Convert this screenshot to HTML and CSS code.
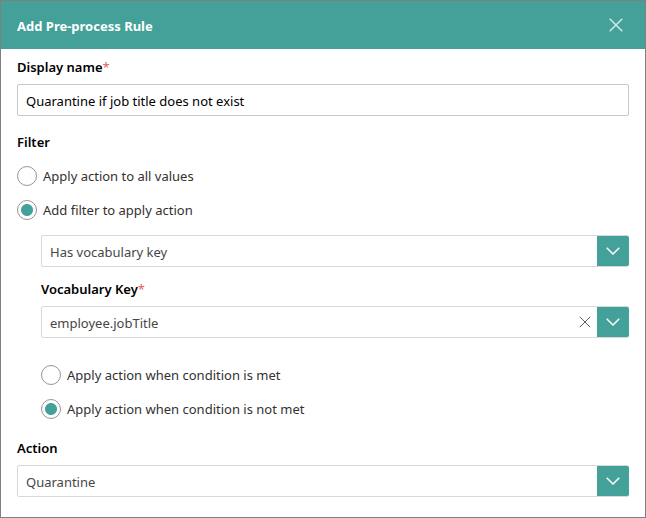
FILE: index.html
```html
<!DOCTYPE html>
<html lang="en">
<head>
<meta charset="utf-8">
<title>Add Pre-process Rule</title>
<link rel="stylesheet" href="styles.css">
</head>
<body>
<form class="dialog">
  <header class="dialog-header">
    <h1 class="title">Add Pre-process Rule</h1>
    <button class="icon-button close" type="button" aria-label="Close">
      <svg width="14" height="14" viewBox="0 0 14 14"><path d="M.7.7l12.6 12.6M13.3.7L.7 13.3"/></svg>
    </button>
  </header>
  <div class="dialog-body">
    <div class="field">
      <label class="label" for="name">Display name<span class="required">*</span></label>
      <input class="control text-input" id="name" type="text" value="Quarantine if job title does not exist" required>
    </div>

    <fieldset class="filter">
      <legend class="label">Filter</legend>
      <div class="radios">
        <label class="radio"><input type="radio" name="filter">Apply action to all values</label>
        <label class="radio"><input type="radio" name="filter" checked>Add filter to apply action</label>
      </div>
      <div class="nested">
        <div class="dropdown">
          <select class="control" aria-label="Filter type"><option>Has vocabulary key</option></select>
          <span class="arrow"><svg width="14" height="8" viewBox="0 0 14 8"><path d="M.7.7L7 7L13.3.7"/></svg></span>
        </div>
        <div class="field">
          <label class="label" for="key">Vocabulary Key<span class="required">*</span></label>
          <div class="dropdown">
            <select class="control" id="key"><option>employee.jobTitle</option></select>
            <button class="icon-button clear" type="button" aria-label="Clear">
              <svg width="12" height="12" viewBox="0 0 12 12"><path d="M.8.8l10.4 10.4M11.2.8L.8 11.2"/></svg>
            </button>
            <span class="arrow"><svg width="14" height="8" viewBox="0 0 14 8"><path d="M.7.7L7 7L13.3.7"/></svg></span>
          </div>
        </div>
        <div class="radios conditions">
          <label class="radio"><input type="radio" name="condition">Apply action when condition is met</label>
          <label class="radio"><input type="radio" name="condition" checked>Apply action when condition is not met</label>
        </div>
      </div>
    </fieldset>

    <div class="field action">
      <label class="label" for="action">Action</label>
      <div class="dropdown">
        <select class="control" id="action"><option>Quarantine</option></select>
        <span class="arrow"><svg width="14" height="8" viewBox="0 0 14 8"><path d="M.7.7L7 7L13.3.7"/></svg></span>
      </div>
    </div>
  </div>
</form>
</body>
</html>
```
FILE: styles.css
```css
:root {
  --teal: #43a199;
}

* {
  box-sizing: border-box;
}

body {
  margin: 0;
  background: #fff;
  color: #323130;
  font: 13px/20px "Noto Sans", "Open Sans", sans-serif;
}

.dialog {
  border: 1px solid #7f7f7f;
}

.dialog-header {
  display: flex;
  align-items: center;
  justify-content: space-between;
  height: 48px;
  padding: 0 16px;
  background: var(--teal);
  color: #fff;
}

.title {
  margin: 0;
  padding-top: 2px;
  font-size: 13px;
  font-weight: 700;
}

.dialog-body {
  padding: 8px 16px 20px;
}

.label {
  display: block;
  padding: 0;
  color: #000;
  font-weight: 600;
}

.required {
  color: #ec5b5b;
  font-weight: 400;
}

.field {
  display: flex;
  flex-direction: column;
  gap: 7px;
}

.control {
  width: 100%;
  height: 32px;
  margin: 0;
  padding: 2px 8px 0;
  border: 1px solid #d5dad9;
  border-radius: 2px;
  background: #fff;
  color: #484644;
  font: inherit;
  appearance: none;
}

.text-input {
  border-color: #c8c8c8;
  color: #000;
}

.filter {
  min-width: 0;
  margin: 16px 0 0;
  padding: 0;
  border: 0;
}

.radios {
  display: flex;
  flex-direction: column;
  gap: 14px;
  margin-top: 14px;
}

.radio {
  display: flex;
  align-items: center;
  gap: 6px;
}

.radio input {
  width: 20px;
  height: 20px;
  margin: 0;
  border: 1px solid #979593;
  border-radius: 50%;
  background: #fff;
  appearance: none;
}

.radio input:checked {
  background: radial-gradient(circle, var(--teal) 5.5px, transparent 6.5px);
}

.nested {
  display: flex;
  flex-direction: column;
  gap: 12px;
  margin: 15px 0 0 24px;
}

.conditions {
  margin-top: 15px;
}

.dropdown {
  display: grid;
  grid-template-columns: 1fr 24px 32px;
  align-items: center;
}

.dropdown select {
  grid-area: 1 / 1 / 2 / -1;
}

.arrow {
  display: grid;
  grid-area: 1 / 3;
  place-items: center;
  height: 30px;
  border-radius: 0 2px 2px 0;
  background: var(--teal);
  color: #fff;
  pointer-events: none;
}

.icon-button {
  display: grid;
  place-items: center;
  padding: 0;
  border: 0;
  background: none;
}

.close {
  width: 26px;
  height: 32px;
  color: #d0e8e6;
}

.clear {
  grid-area: 1 / 2;
  height: 24px;
  color: #605e5c;
}

.action {
  margin-top: 19px;
}

svg {
  fill: none;
  stroke: currentColor;
  stroke-width: 1.5;
}

.clear svg {
  stroke-width: 1;
}
```
